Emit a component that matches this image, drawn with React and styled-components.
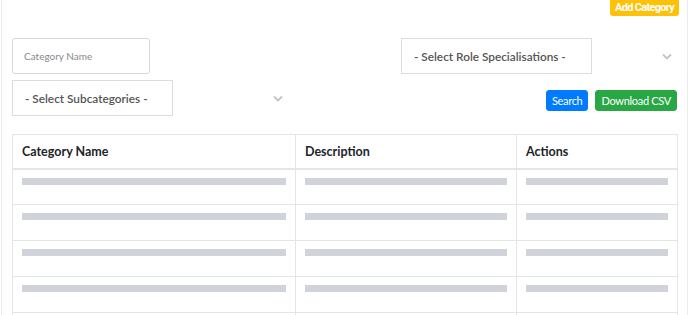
import React from 'react';
import styled, { createGlobalStyle } from 'styled-components';

const GlobalStyle = createGlobalStyle`
  html, body {
    margin: 0;
    padding: 0;
    background: #fff;
    font-family: Lato, 'Open Sans', sans-serif;
    color: #212529;
    overflow: hidden;
  }
`;

const Page = styled.div`
  margin-left: 1px;
  width: 687px;
  min-height: 315px;
  box-sizing: border-box;
  border-left: 1px solid #ececec;
  border-right: 1px solid #ececec;
  padding: 0 10px;
`;

const TopBar = styled.div`
  display: flex;
  justify-content: flex-end;
  margin-right: -2px;
`;

const AddButton = styled.button`
  height: 16px;
  padding: 0 5px 1px;
  border: none;
  border-radius: 0 0 3px 3px;
  background: #ffc107;
  color: #fff;
  font-family: Roboto, sans-serif;
  font-size: 11px;
  font-weight: 700;
  letter-spacing: -0.7px;
  line-height: 1;
  cursor: pointer;
`;

const Button = styled.button`
  height: 21px;
  padding: 0 ${p => p.$px || 6}px;
  border: 1px solid ${p => p.$color};
  border-radius: 3px;
  background: ${p => p.$color};
  color: #fff;
  font-family: Lato, sans-serif;
  font-size: 11px;
  letter-spacing: -0.3px;
  line-height: 1;
  cursor: pointer;
`;

const Filters = styled.div`
  display: flex;
  justify-content: space-between;
  margin-top: 22px;
`;

const Column = styled.div`
  width: 276px;
  display: flex;
  flex-direction: column;
  gap: ${p => p.$gap}px;
`;

const TextInput = styled.input`
  width: 138px;
  height: 36px;
  box-sizing: border-box;
  border: 1px solid #d5d9dd;
  border-radius: 3px;
  padding: 0 11px;
  font-family: Lato, sans-serif;
  font-size: 10px;
  outline: none;
  &::placeholder {
    color: #8a8a8a;
  }
`;

const SelectWrap = styled.div`
  display: flex;
  align-items: center;
  height: 36px;
`;

const SelectBox = styled.div`
  width: ${p => p.$w}px;
  height: 36px;
  box-sizing: border-box;
  border: 1px solid #d9dde1;
  display: flex;
  align-items: center;
  padding-left: 12px;
  font-size: 11.8px;
  font-weight: 600;
  color: #555;
  white-space: nowrap;
`;

const Chevron = styled.svg`
  margin-left: auto;
  margin-right: 5px;
  width: 10px;
  height: 7px;
`;

const ButtonRow = styled.div`
  display: flex;
  justify-content: flex-end;
  gap: 7px;
`;

const Table = styled.table`
  margin-top: 18px;
  width: 665px;
  border-collapse: collapse;
  table-layout: fixed;
`;

const HeadCell = styled.th`
  width: ${p => p.$w}px;
  height: 34px;
  box-sizing: border-box;
  text-align: left;
  padding: 0 9px;
  font-size: 12.5px;
  font-weight: 700;
  color: #212529;
  border: 1px solid #e3e6e9;
  border-bottom: 2px solid #e3e6e9;
`;

const Cell = styled.td`
  height: 36px;
  padding: 8px 9px 0 9px;
  vertical-align: top;
  box-sizing: border-box;
  border: 1px solid #e3e6e9;
`;

const Skeleton = styled.div`
  height: 7px;
  background: #d0d4da;
`;

const ChevronIcon = () => (
  <Chevron viewBox="0 0 10 7">
    <path d="M1 1.5 L5 5.5 L9 1.5" fill="none" stroke="#c4c4c4" strokeWidth="1.8" />
  </Chevron>
);

export default function App() {
  const rows = [0, 1, 2, 3, 4];
  return (
    <>
      <GlobalStyle />
      <Page>
        <TopBar>
          <AddButton>Add Category</AddButton>
        </TopBar>
        <Filters>
          <Column $gap={6}>
            <TextInput placeholder="Category Name" />
            <SelectWrap>
              <SelectBox $w={161}>- Select Subcategories -</SelectBox>
              <ChevronIcon />
            </SelectWrap>
          </Column>
          <Column $gap={16}>
            <SelectWrap>
              <SelectBox $w={191}>- Select Role Specialisations -</SelectBox>
              <ChevronIcon />
            </SelectWrap>
            <ButtonRow>
              <Button $color="#007bff" $px={5}>Search</Button>
              <Button $color="#28a745" $px={5}>Download CSV</Button>
            </ButtonRow>
          </Column>
        </Filters>
        <Table>
          <thead>
            <tr>
              <HeadCell $w={283}>Category Name</HeadCell>
              <HeadCell $w={221}>Description</HeadCell>
              <HeadCell $w={161}>Actions</HeadCell>
            </tr>
          </thead>
          <tbody>
            {rows.map(r => (
              <tr key={r}>
                <Cell><Skeleton /></Cell>
                <Cell><Skeleton /></Cell>
                <Cell><Skeleton /></Cell>
              </tr>
            ))}
          </tbody>
        </Table>
      </Page>
    </>
  );
}
